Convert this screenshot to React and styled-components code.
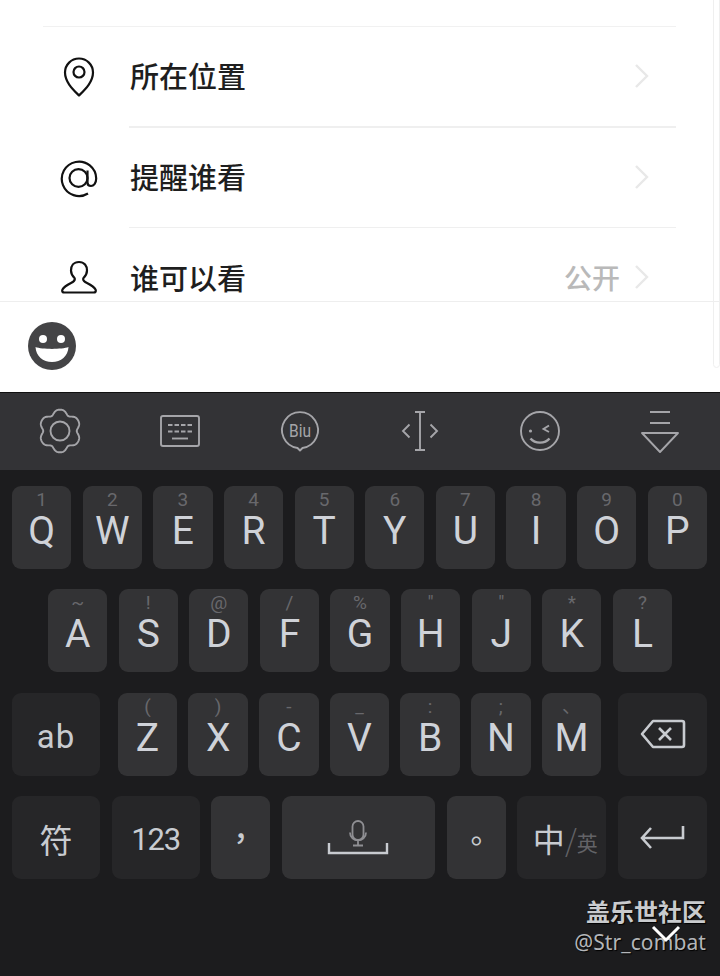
import React from 'react';
import styled, {createGlobalStyle} from 'styled-components';

const CJK = '"Noto Sans CJK SC", "Noto Sans", sans-serif';
const CJK_CENTERED = '"Noto Sans CJK TC", "Noto Sans", sans-serif';

const GlobalStyle = createGlobalStyle`
  html, body { margin: 0; padding: 0; background: #fff; }
  * { box-sizing: border-box; }
`;

const Page = styled.div`
  position: relative;
  width: 720px;
  height: 976px;
  overflow: hidden;
  display: flex;
  flex-direction: column;
  font-family: Roboto, ${CJK};
`;

/* white upper half */
const Sheet = styled.div`
  position: relative;
  height: 392px;
  background: #fff;
  display: flex;
  flex-direction: column;
`;

const Scrollbar = styled.div`
  position: absolute;
  top: -10px;
  right: 0;
  width: 7px;
  height: 378px;
  border: 1px solid #efefef;
  border-radius: 0 0 4px 4px;
`;

const List = styled.div`
  height: 301px;
  overflow: hidden;
  padding-top: 26px;
`;

const TopLine = styled.div`
  height: 1px;
  margin: 0 44px 0 43px;
  background: #f1f1f1;
`;

const Row = styled.div`
  display: flex;
  height: ${p => p.$height || 100}px;
  padding-right: 44px;
  flex-direction: column;
`;

const RowBody = styled.div`
  flex: 1;
  display: flex;
  align-items: center;
`;

const RowIcon = styled.div`
  width: 130px;
  flex: none;
  padding-left: ${p => p.$left}px;
  display: flex;
  align-items: center;
`;

const RowTitle = styled.span`
  flex: 1;
  font-family: ${CJK};
  font-size: 29px;
  font-weight: 500;
  line-height: 40px;
  margin-top: -3px;
  color: #1e1e1e;
`;

const RowValue = styled.span`
  font-family: ${CJK};
  font-size: 28px;
  font-weight: 500;
  line-height: 40px;
  margin-top: -3px;
  color: #b9b9b9;
  margin-right: 14px;
`;

const Chevron = styled.svg`
  width: 16px;
  height: 26px;
  margin: -2px 26px 0 0;
  fill: none;
  stroke: #e8e8e8;
  stroke-width: 2.4;
`;

const RowLine = styled.div`
  height: ${p => p.$thick ? 2 : 1}px;
  margin-left: 129px;
  background: #efefef;
`;

const InputBar = styled.div`
  flex: 1;
  border-top: 1px solid #eeeeee;
  display: flex;
  align-items: center;
  padding: 0 0 2px 28px;
`;

/* keyboard */
const Keyboard = styled.div`
  flex: 1;
  display: flex;
  flex-direction: column;
  background: #1c1c1e;
`;

const Toolbar = styled.div`
  height: 78px;
  background: #333336;
  border-top: 1px solid #111;
  display: grid;
  grid-template-columns: repeat(6, 1fr);
  padding-bottom: 2px;
`;

const ToolSlot = styled.div`
  display: flex;
  align-items: center;
  justify-content: center;
  svg {
    width: 48px;
    height: 48px;
    fill: none;
    stroke: #a5a5a9;
    stroke-width: 1.9;
  }
`;

const Keys = styled.div`
  display: flex;
  flex-direction: column;
  gap: 20.4px;
  padding: 16px 13px 0 12px;
`;

const KeyRow = styled.div`
  display: flex;
  height: 83px;
  gap: ${p => p.$gap || 11.3}px;
  padding: 0 ${p => p.$right || 0}px 0 ${p => p.$left || 0}px;
`;

const Key = styled.div`
  flex: ${p => p.$width ? `0 0 ${p.$width}px` : '1 1 0'};
  margin: 0 ${p => p.$after || 0}px 0 ${p => p.$before || 0}px;
  padding-top: ${p => p.$nudge || 0}px;
  border-radius: 9px;
  background: ${p => p.$fn ? '#262628' : '#333335'};
  color: #d2d5da;
  display: flex;
  flex-direction: column;
  align-items: center;
  justify-content: ${p => p.$center ? 'center' : 'flex-start'};
`;

const Hint = styled.span`
  height: 20px;
  margin-top: 4px;
  font-size: 19px;
  line-height: 20px;
  color: #68686c;
`;

const Letter = styled.span`
  margin-top: 1px;
  font-size: 39px;
  line-height: 40px;
  color: #cfd2d8;
`;

const FnLabel = styled.span`
  font-family: ${p => p.$cjk ? CJK : 'Roboto, sans-serif'};
  font-size: ${p => p.$size || 33}px;
  line-height: 40px;
  letter-spacing: ${p => p.$spacing || 0}px;
  color: #c8cbd0;
`;

const Punct = styled.span`
  font-family: ${CJK_CENTERED};
  font-size: 30px;
  font-weight: ${p => p.$weight || 400};
  line-height: 40px;
  margin-top: ${p => p.$shift || 0}px;
  color: #c8cbd0;
`;

const Lang = styled.div`
  display: flex;
  align-items: flex-end;
  margin-left: 7px;
  font-family: ${CJK};
  color: #c8cbd0;
  font-size: 32px;
  line-height: 40px;
`;

const LangSmall = styled.span`
  font-size: 21px;
  line-height: 32px;
  color: #636367;
`;

const Slash = styled.span`
  font-size: 30px;
  line-height: 38px;
  font-weight: 300;
  color: #636367;
`;

const KeyGlyph = styled.svg`
  fill: none;
  stroke: ${p => p.$stroke || '#c8cbd0'};
  stroke-width: ${p => p.$sw || 2.6};
`;

const Watermark = styled.div`
  position: absolute;
  right: 14px;
  bottom: 19px;
  display: flex;
  flex-direction: column;
  align-items: flex-end;
  color: #c9cbce;
  text-shadow: 1px 1px 1px #000;
`;

const MarkTitle = styled.span`
  font-family: ${CJK};
  font-size: 24px;
  font-weight: 700;
  line-height: 32px;
`;

const MarkHandle = styled.span`
  font-family: "Noto Sans", sans-serif;
  font-size: 21px;
  line-height: 30px;
  letter-spacing: 0.1px;
  color: #b4b6b9;
`;

const HideArrow = styled.svg`
  position: absolute;
  left: 651px;
  top: 925px;
  width: 30px;
  height: 18px;
  fill: none;
  stroke: #fff;
  stroke-width: 3;
`;

// six broad lobes, top one pointing straight up
const gearPath = () => {
  const pts = [];
  for (let i = 0; i < 180; i += 1) {
    const a = (i / 180) * Math.PI * 2;
    const r = 19.6 + 2.1 * Math.cos(6 * a) - 0.4 * Math.cos(12 * a);
    pts.push(`${(24 + r * Math.sin(a) * 0.98).toFixed(2)} ${(24 - r * Math.cos(a)).toFixed(2)}`);
  }
  return `M${pts.join('L')}Z`;
};

const PinIcon = () => (
  <svg width="36" height="40" viewBox="0 0 36 40" fill="none" stroke="#111" strokeWidth="2.2">
    <path d="M18 38.5C12 32.5 4 25 4 15.5A14 14 0 0 1 32 15.5C32 25 24 32.5 18 38.5Z" strokeLinejoin="round" />
    <circle cx="18" cy="15" r="5.5" />
  </svg>
);

const AtIcon = () => (
  <svg width="40" height="40" viewBox="0 0 40 40" fill="none" stroke="#111" strokeWidth="2.2">
    <path d="M29 35.5A17.2 17.2 0 1 1 37.2 20.5C37.2 25.5 34.5 28 32 28C29.6 28 28.5 26.5 28.5 24.5V12.5" />
    <ellipse cx="19.5" cy="20" rx="9" ry="8.8" />
  </svg>
);

const PersonIcon = () => (
  <svg width="36" height="36" viewBox="0 0 36 36" fill="none" stroke="#111" strokeWidth="2.2">
    <path d="M18 2C12.5 2 10 6 10 10.5C10 14 12 16.5 13.5 18C14.5 20 13 21.5 10 23C7 24.5 3 26.5 1.5 29.5C0.7 31.5 1.5 32.5 3.5 32.5H32.5C34.5 32.5 35.3 31.5 34.5 29.5C33 26.5 29 24.5 26 23C23 21.5 21.5 20 22.5 18C24 16.5 26 14 26 10.5C26 6 23.5 2 18 2Z" strokeLinejoin="round" />
  </svg>
);

const ChevronRight = () => (
  <Chevron viewBox="0 0 16 26"><path d="M2 2L13 13L2 24" /></Chevron>
);

const Smiley = () => (
  <svg width="48" height="48" viewBox="0 0 48 48">
    <circle cx="24" cy="24" r="24" fill="#444446" />
    <circle cx="15" cy="17" r="4" fill="#fff" />
    <circle cx="33" cy="17" r="4" fill="#fff" />
    <path d="M7.5 25C14 27.5 34 27.5 40.5 25C40 34 33 40 24 40C15 40 8 34 7.5 25Z" fill="#fff" />
  </svg>
);

const tools = [
  <svg viewBox="0 0 48 48" key="gear">
    <path d={gearPath()} strokeLinejoin="round" />
    <circle cx="24" cy="24" r="9.5" />
  </svg>,
  <svg viewBox="0 0 48 48" key="kbd">
    <rect x="5" y="9" width="38" height="30" rx="2" />
    <path d="M12 18h24M12 24.5h24" strokeDasharray="4.5 2" />
    <path d="M16 31.5h16" />
  </svg>,
  <svg viewBox="0 0 48 48" key="biu">
    <path d="M24 43.5L21.5 41A18 18 0 1 1 26.5 41Z" strokeLinejoin="round" />
    <text x="24" y="29.5" textAnchor="middle" fontFamily="Roboto, sans-serif" fontSize="17.5" textLength="22" lengthAdjust="spacingAndGlyphs" fill="#a5a5a9" stroke="none">Biu</text>
  </svg>,
  <svg viewBox="0 0 48 48" key="cursor">
    <path d="M19 5h10M24 5v38M19 43h10" />
    <path d="M13.5 17.5L7 24L13.5 30.5M34.5 17.5L41 24L34.5 30.5" />
  </svg>,
  <svg viewBox="0 0 48 48" key="wink">
    <circle cx="24" cy="24" r="19" />
    <circle cx="14.5" cy="24" r="1.6" fill="#a5a5a9" stroke="none" />
    <path d="M33 18.5L27.5 22L33 25" />
    <path d="M14.5 31.5C19 37 29 37 33.5 31.5" strokeWidth="2.4" />
  </svg>,
  <svg viewBox="0 0 48 48" key="hide">
    <path d="M14 5h20M14 16h20" />
    <path d="M6 26H42L24 45Z" strokeLinejoin="round" />
  </svg>
];

const rowOne = [['Q', '1'], ['W', '2'], ['E', '3'], ['R', '4'], ['T', '5'], ['Y', '6'], ['U', '7'], ['I', '8'], ['O', '9'], ['P', '0']];
const rowTwo = [['A', '~'], ['S', '!'], ['D', '@'], ['F', '/'], ['G', '%'], ['H', '"'], ['J', '"'], ['K', '*'], ['L', '?']];
const rowThree = [['Z', '('], ['X', ')'], ['C', '-'], ['V', '_'], ['B', ':'], ['N', ';'], ['M', '、']];

const LetterKey = ({letter, hint}) => (
  <Key>
    <Hint>{hint}</Hint>
    <Letter>{letter}</Letter>
  </Key>
);

const App = () => (
  <Page>
    <GlobalStyle />
    <Sheet>
      <Scrollbar />
      <List>
        <TopLine />
        <Row $height={101}>
          <RowBody>
            <RowIcon $left={61}><PinIcon /></RowIcon>
            <RowTitle>所在位置</RowTitle>
            <ChevronRight />
          </RowBody>
          <RowLine $thick />
        </Row>
        <Row>
          <RowBody>
            <RowIcon $left={59}><AtIcon /></RowIcon>
            <RowTitle>提醒谁看</RowTitle>
            <ChevronRight />
          </RowBody>
          <RowLine />
        </Row>
        <Row>
          <RowBody>
            <RowIcon $left={61}><PersonIcon /></RowIcon>
            <RowTitle>谁可以看</RowTitle>
            <RowValue>公开</RowValue>
            <ChevronRight />
          </RowBody>
        </Row>
      </List>
      <InputBar><Smiley /></InputBar>
    </Sheet>
    <Keyboard>
      <Toolbar>
        {tools.map(tool => <ToolSlot key={tool.key}>{tool}</ToolSlot>)}
      </Toolbar>
      <Keys>
        <KeyRow>
          {rowOne.map(([l, h]) => <LetterKey key={l} letter={l} hint={h} />)}
        </KeyRow>
        <KeyRow $left={36} $right={35}>
          {rowTwo.map(([l, h]) => <LetterKey key={l} letter={l} hint={h} />)}
        </KeyRow>
        <KeyRow>
          <Key $fn $center $width={88} $after={6.5} $nudge={6}>
            <FnLabel $spacing={1}>ab</FnLabel>
          </Key>
          {rowThree.map(([l, h]) => <LetterKey key={l} letter={l} hint={h} />)}
          <Key $fn $center $width={89} $before={5.5}>
            <KeyGlyph width="46" height="30" viewBox="0 0 46 30">
              <path d="M13 2H42C43.5 2 44 2.8 44 4V26C44 27.2 43.5 28 42 28H13L2 15Z" strokeLinejoin="round" />
              <path d="M19 9L31 21M31 9L19 21" />
            </KeyGlyph>
          </Key>
        </KeyRow>
        <KeyRow $gap={11.67}>
          <Key $fn $center $width={88} $nudge={2}>
            <FnLabel $cjk $size={33}>符</FnLabel>
          </Key>
          <Key $fn $center $width={88} $nudge={5}>
            <FnLabel $size={31} $spacing={-1.2}>123</FnLabel>
          </Key>
          <Key $center $width={59}>
            <Punct $weight={500} $shift={-3}>，</Punct>
          </Key>
          <Key $center $width={153}>
            <KeyGlyph width="62" height="36" viewBox="0 0 62 36" $sw={2.4}>
              <g stroke="#8f8f93" strokeWidth="1.8">
                <rect x="25.5" y="1" width="11" height="19" rx="5.5" />
                <path d="M23 12.5C23 23 39 23 39 12.5M31 21V25.5M26 25.5H36" />
              </g>
              <path d="M2 23V33H60V23" />
            </KeyGlyph>
          </Key>
          <Key $center $width={59}>
            <Punct $shift={3}>。</Punct>
          </Key>
          <Key $fn $center $width={89}>
            <Lang>
              中<Slash>/</Slash><LangSmall>英</LangSmall>
            </Lang>
          </Key>
          <Key $fn $center $width={89}>
            <KeyGlyph width="46" height="26" viewBox="0 0 46 26">
              <path d="M44 1V13H3M12 3L3 13L12 23" />
            </KeyGlyph>
          </Key>
        </KeyRow>
      </Keys>
    </Keyboard>
    <Watermark>
      <MarkTitle>盖乐世社区</MarkTitle>
      <MarkHandle>@Str_combat</MarkHandle>
    </Watermark>
    <HideArrow viewBox="0 0 30 18"><path d="M2 2L15 15L28 2" /></HideArrow>
  </Page>
);

export default App;
